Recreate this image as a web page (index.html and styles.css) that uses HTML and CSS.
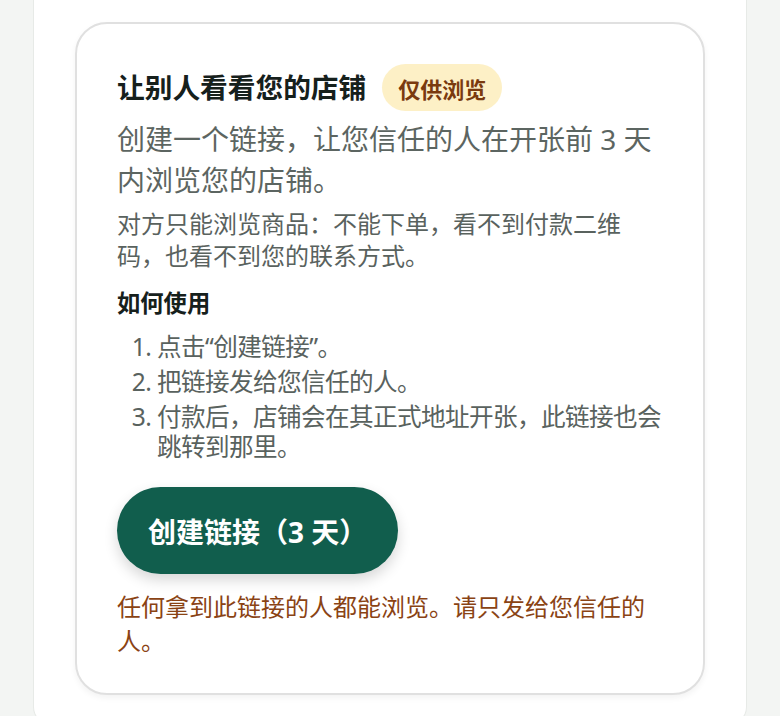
FILE: index.html
```html
<!DOCTYPE html>
<html lang="zh-CN">
<head>
<meta charset="utf-8">
<title>让别人看看您的店铺</title>
<link rel="stylesheet" href="styles.css">
</head>
<body>
<div class="panel">
  <section class="card">
    <div class="title-row">
      <h2 class="title">让别人看看您的店铺</h2>
      <span class="badge">仅供浏览</span>
    </div>
    <p class="lead">创建一个链接，让您信任的人在开张前 3 天内浏览您的店铺。</p>
    <p class="note">对方只能浏览商品：不能下单，看不到付款二维码，也看不到您的联系方式。</p>
    <h3 class="howto">如何使用</h3>
    <ol class="steps">
      <li>点击“创建链接”。</li>
      <li>把链接发给您信任的人。</li>
      <li>付款后，店铺会在其正式地址开张，此链接也会跳转到那里。</li>
    </ol>
    <button class="create-btn" type="button">创建链接（3 天）</button>
    <p class="warning">任何拿到此链接的人都能浏览。请只发给您信任的人。</p>
  </section>
</div>
</body>
</html>
```

FILE: styles.css
```css
html, body {
  margin: 0;
  padding: 0;
}

body {
  background: #f3f5f3;
  font-family: "Noto Sans", "Noto Sans CJK SC", sans-serif;
  color: #5b6460;
}

.panel {
  margin: 0 33px;
  min-height: 674px;
  padding: 22px 41px 28px;
  background: #ffffff;
  border: 1px solid #e7eae7;
  border-top: none;
  border-radius: 0 0 18px 18px;
}

.card {
  border: 2px solid #e0e0e0;
  border-radius: 32px;
  padding: 40px 36px 35px 40px;
  background: #ffffff;
  box-shadow: 0 3px 6px rgba(0, 0, 0, 0.05);
}

.title-row {
  display: flex;
  align-items: center;
  gap: 16px;
}

.title {
  margin: 0;
  font-size: 27.7px;
  line-height: 47px;
  font-weight: 700;
  color: #16201c;
}

.badge {
  display: inline-flex;
  align-items: center;
  height: 47px;
  padding: 0 16px;
  border-radius: 999px;
  background: #fdf0c6;
  color: #7a3a0f;
  font-size: 22px;
  font-weight: 700;
}

.lead {
  margin: 8px 0 0;
  max-width: 545px;
  font-size: 28px;
  line-height: 41px;
  color: #5c6561;
}

.note {
  margin: 7px 0 0;
  max-width: 520px;
  font-size: 24px;
  line-height: 32px;
  color: #59625e;
}

.howto {
  margin: 16px 0 0;
  font-size: 23.3px;
  line-height: 30px;
  font-weight: 700;
  color: #16201c;
}

.steps {
  margin: 14px 0 0;
  padding-left: 40px;
  font-size: 24.6px;
  letter-spacing: -0.6px;
  line-height: 30px;
  color: #59625e;
}

.steps li + li {
  margin-top: 5px;
}

.create-btn {
  display: block;
  margin-top: 25px;
  height: 87px;
  padding: 0 31px;
  border: none;
  border-radius: 44px;
  background: #115e4d;
  color: #ffffff;
  font-family: "Noto Sans", "Noto Sans CJK SC", sans-serif;
  font-size: 28px;
  font-weight: 700;
  box-shadow: 0 6px 14px rgba(0, 0, 0, 0.16);
  cursor: pointer;
}

.warning {
  margin: 16px 0 0;
  max-width: 530px;
  font-size: 24px;
  line-height: 34px;
  color: #8a4314;
}
```
